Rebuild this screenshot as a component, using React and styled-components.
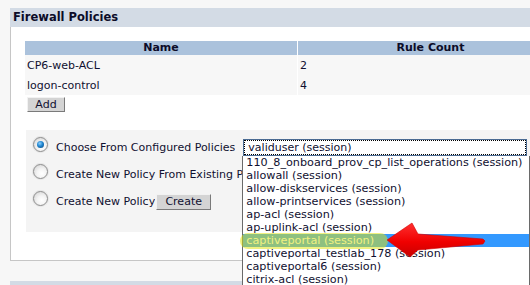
import React from "react";
import styled, { createGlobalStyle } from "styled-components";

const GlobalStyle = createGlobalStyle`
  html, body {
    margin: 0;
    padding: 0;
    background: #f7f7f7;
    overflow: hidden;
  }
  body {
    font-family: "DejaVu Sans", Verdana, sans-serif;
    font-size: 11px;
    color: #101030;
  }
`;

const Page = styled.div`
  position: relative;
  width: 530px;
  height: 285px;
  padding: 8px 0 0 10px;
  box-sizing: border-box;
  overflow: hidden;
`;

const TitleBar = styled.div`
  height: 19px;
  line-height: 19px;
  padding-left: 3px;
  background: #d3dbe5;
  font-weight: bold;
  font-size: 11.5px;
  color: #0c0c28;
  white-space: nowrap;
`;

const Panel = styled.div`
  background: #ffffff;
  border-left: 1px solid #c6c6c6;
  border-bottom: 1px solid #c6c6c6;
  padding: 14px 0 28px 14px;
  margin-bottom: 20px;
`;

const Table = styled.div`
  display: grid;
  grid-template-columns: 272px 265px;
  column-gap: 1px;
  background: #ffffff;
  width: 538px;
`;

const HeadCell = styled.div`
  height: 14px;
  line-height: 14px;
  background: #abc2dc;
  font-weight: bold;
  text-align: center;
  color: #0c0c28;
`;

const Cell = styled.div`
  height: 20px;
  line-height: 22px;
  padding-left: 2px;
  background: #f7f7f7;
  white-space: nowrap;
`;

const Button = styled.button`
  display: block;
  font-family: "DejaVu Sans", Verdana, sans-serif;
  font-size: 11px;
  color: #101030;
  background: #d4d4d4;
  border: 1px solid;
  border-color: #f2f2f2 #7a7a7a #7a7a7a #f2f2f2;
  height: ${(p) => p.$h}px;
  width: ${(p) => p.$w}px;
  padding: 0;
  margin: ${(p) => p.$mt || 0}px 0 0 ${(p) => p.$ml || 0}px;
  line-height: 1;
  flex: none;
`;

const OptionsBox = styled.div`
  margin: 18px 0 0 1px;
  background: #f4f4f4;
  padding: 4px 0 17px 6px;
  width: 560px;
`;

const OptionRow = styled.div`
  display: flex;
  align-items: center;
  height: 27px;
  white-space: nowrap;
`;

const Radio = styled.span`
  flex: none;
  width: 13px;
  height: 13px;
  border-radius: 50%;
  border: 1px solid #8c8c8c;
  background: radial-gradient(circle at 60% 65%, #ffffff 0%, #f4f4f4 40%, #cfcfcf 100%);
  box-shadow: 0 0 0 1px #e6e6e6;
  margin: 0 8px 6px 1px;
  display: flex;
  align-items: center;
  justify-content: center;
  &::after {
    content: "";
    display: ${(p) => (p.$checked ? "block" : "none")};
    width: 7px;
    height: 7px;
    border-radius: 50%;
    background: radial-gradient(circle at 40% 35%, #8fd0ff 0%, #1f86d0 45%, #0b3f73 100%);
  }
`;

const Label = styled.span`
  flex: none;
  overflow: hidden;
  max-width: ${(p) => (p.$clip ? `${p.$clip}px` : "none")};
`;

const SelectWrap = styled.div`
  position: relative;
  z-index: 5;
  flex: none;
  margin-left: 8px;
  width: 284px;
  height: 17px;
  box-sizing: border-box;
  border: 1px solid #4a6b93;
  background: #ffffff;
`;

const SelectFocus = styled.div`
  height: 100%;
  box-sizing: border-box;
  border: 1px dotted #000000;
  padding-left: 3px;
  line-height: 13px;
`;

const DropList = styled.div`
  position: absolute;
  top: 16px;
  left: -2px;
  width: 286px;
  background: #ffffff;
  border: 1px solid #6a6a6a;
  border-top: none;
`;

const DropItem = styled.div`
  height: 13px;
  line-height: 13px;
  padding-left: 3px;
  font-size: 11.2px;
  white-space: nowrap;
  background: ${(p) => (p.$active ? "#3399ff" : "transparent")};
  color: ${(p) => (p.$active ? "#ffffff" : "#101030")};
`;

const Highlighter = styled.div`
  position: absolute;
  left: 240px;
  top: 233px;
  width: 148px;
  height: 16px;
  border-radius: 8px;
  background: rgba(226, 229, 12, 0.52);
  z-index: 10;
`;

const Arrow = styled.svg`
  position: absolute;
  left: 380px;
  top: 218px;
  z-index: 11;
`;

const policies = [
  { name: "CP6-web-ACL", count: 2 },
  { name: "logon-control", count: 4 },
];

const options = [
  "110_8_onboard_prov_cp_list_operations (session)",
  "allowall (session)",
  "allow-diskservices (session)",
  "allow-printservices (session)",
  "ap-acl (session)",
  "ap-uplink-acl (session)",
  "captiveportal (session)",
  "captiveportal_testlab_178 (session)",
  "captiveportal6 (session)",
  "citrix-acl (session)",
];

export default function App() {
  return (
    <>
      <GlobalStyle />
      <Page>
        <TitleBar>Firewall Policies</TitleBar>
        <Panel>
          <Table>
            <HeadCell>Name</HeadCell>
            <HeadCell>Rule Count</HeadCell>
            {policies.map((p) => (
              <React.Fragment key={p.name}>
                <Cell>{p.name}</Cell>
                <Cell>{p.count}</Cell>
              </React.Fragment>
            ))}
          </Table>
          <Button $w={38} $h={15} $ml={2} $mt={2}>Add</Button>

          <OptionsBox>
            <OptionRow>
              <Radio $checked />
              <Label>Choose From Configured Policies</Label>
              <SelectWrap>
                <SelectFocus>validuser (session)</SelectFocus>
                <DropList>
                  {options.map((o) => (
                    <DropItem key={o} $active={o === "captiveportal (session)"}>
                      {o}
                    </DropItem>
                  ))}
                </DropList>
              </SelectWrap>
            </OptionRow>
            <OptionRow>
              <Radio />
              <Label $clip={188}>Create New Policy From Existing Policy</Label>
            </OptionRow>
            <OptionRow>
              <Radio />
              <Label>Create New Policy</Label>
              <Button $w={55} $h={16} $ml={1}>Create</Button>
            </OptionRow>
          </OptionsBox>
        </Panel>
        <TitleBar />

        <Highlighter />
        <Arrow width="110" height="44" viewBox="380 218 110 44">
          <defs>
            <linearGradient id="arrowFill" x1="0" y1="0" x2="0" y2="1">
              <stop offset="0" stopColor="#ff3030" />
              <stop offset="0.55" stopColor="#f00000" />
              <stop offset="1" stopColor="#c80000" />
            </linearGradient>
          </defs>
          <path
            d="M387,240 L412,223 L418,234 L483,239 L485,241 L483,244 L418,250 L410,257 Z"
            fill="url(#arrowFill)"
            stroke="#d40000"
            strokeWidth="0.6"
            strokeLinejoin="round"
          />
        </Arrow>
      </Page>
    </>
  );
}
